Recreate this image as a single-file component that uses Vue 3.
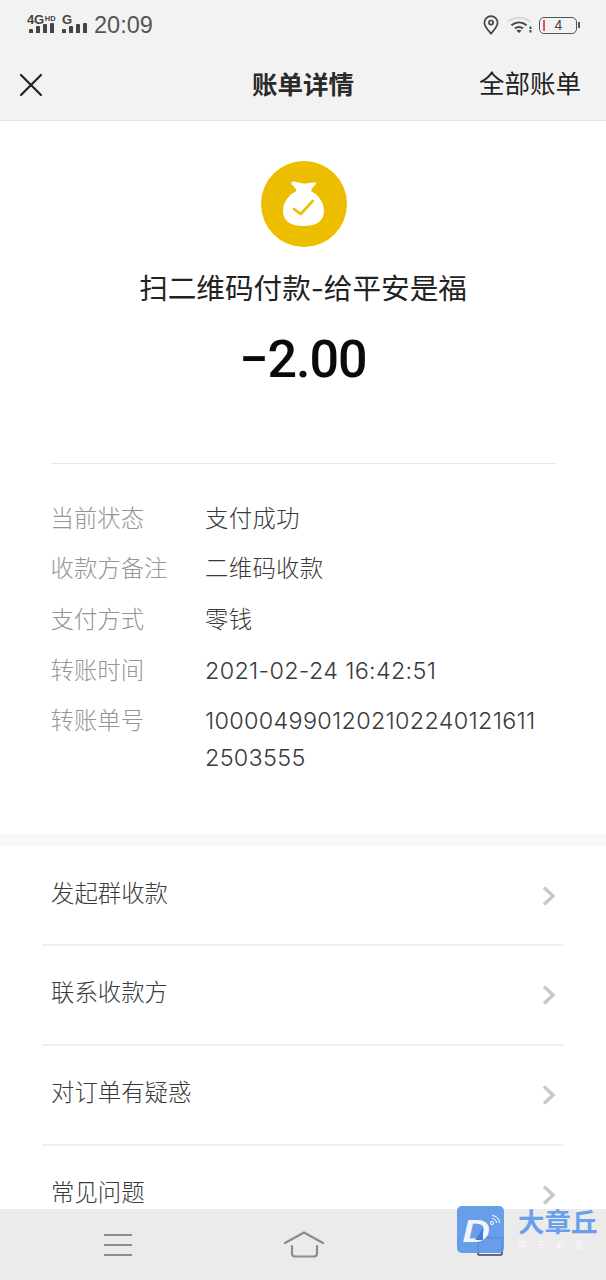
<script setup>
const details = [
  ['当前状态', '支付成功'],
  ['收款方备注', '二维码收款'],
  ['支付方式', '零钱'],
  ['转账时间', '2021-02-24 16:42:51'],
  ['转账单号', '10000499012021022401216112503555'],
]
const menu = ['发起群收款', '联系收款方', '对订单有疑惑', '常见问题']
</script>

<template>
  <div class="page">
    <header class="top">
      <div class="status">
        <div class="status-left">
          <div class="net net-4g">
            <div class="net-label"><b>4G</b><i>HD</i></div>
            <div class="bars"><span class="b1"></span><span class="b2"></span><span class="b3"></span><span class="b4"></span></div>
          </div>
          <div class="net net-g">
            <div class="net-label"><b>G</b></div>
            <div class="bars"><span class="b1"></span><span class="b2"></span><span class="b3"></span><span class="b4"></span></div>
          </div>
          <span class="clock">20:09</span>
        </div>
        <div class="status-right">
          <svg class="pin" width="16" height="20" viewBox="0 0 16 20" fill="none" stroke="#444" stroke-width="1.7">
            <path d="M8 18.6C4.6 14.6 1.4 11.6 1.4 7.8a6.6 6.6 0 0 1 13.2 0c0 3.8-3.2 6.8-6.6 10.800z" />
            <circle cx="8" cy="7.6" r="2.1" />
          </svg>
          <svg class="wifi" width="26" height="18" viewBox="0 0 26 18" fill="none">
            <path d="M1 5.6C7 .6 17 .6 23 5.6" stroke="#d8d8d8" stroke-width="2" />
            <path d="M4.4 9.2c4.6-3.6 10.600-3.600 15.200 0" stroke="#444" stroke-width="2" />
            <path d="M8 12.400c2.600-1.800 5.400-1.800 8 0" stroke="#444" stroke-width="2" />
            <path d="M12 17l-2.600-2.600c1.600-1 3.600-1 5.200 0z" fill="#444" />
            <path d="M23.500 10.500v2.400M23.500 14v2.400" stroke="#444" stroke-width="2" />
          </svg>
          <div class="battery"><span class="level"></span><span class="pct">4</span></div>
          <span class="nub"></span>
        </div>
      </div>
      <div class="nav">
        <svg class="close" width="24" height="24" viewBox="0 0 24 24" fill="none" stroke="#222" stroke-width="2.200" stroke-linecap="round">
          <path d="M2 2l20 20M22 2L2 22" />
        </svg>
        <h1>账单详情</h1>
        <span class="all">全部账单</span>
      </div>
    </header>

    <main class="content">
      <section class="summary">
        <div class="badge">
          <svg width="44" height="50" viewBox="0 0 44 50">
            <path fill="#fff" d="M10 3C13 1.500 17 5 22 4.500 26 4.500 30 3 34 3.500 34.500 4 34 5 33 6 31 8 29.500 10 29 12 36 15.500 42 23 42 32 42 43 33 47 21.500 47 10 47 1 43 1 32 1 23 7 15.500 14.500 12 14 9.500 12 7.500 10 6 9 5 9 3.500 10 3Z" />
            <path fill="none" stroke="#edbd00" stroke-width="2.600" stroke-linecap="round" stroke-linejoin="round" d="M12 30l6.700 5L30.700 22" />
          </svg>
        </div>
        <p class="title">扫二维码付款-给平安是福</p>
        <p class="amount">−2.00</p>
      </section>

      <section class="details">
        <div v-for="row in details" :key="row[0]" class="detail">
          <span class="label">{{ row[0] }}</span>
          <span class="value">{{ row[1] }}</span>
        </div>
      </section>

      <div class="band"></div>

      <ul class="menu">
        <li v-for="item in menu" :key="item">
          <span>{{ item }}</span>
          <svg width="14" height="20" viewBox="0 0 14 20" fill="none" stroke="#c8c8c8" stroke-width="3.400">
            <path d="M2 1.500L11 10l-9 8.500" />
          </svg>
        </li>
      </ul>
    </main>

    <footer class="dock">
      <svg width="30" height="24" viewBox="0 0 30 24" fill="none" stroke="#8c8c8c" stroke-width="2.200">
        <path d="M1 2h28M1 12h28M1 22h28" />
      </svg>
      <svg class="home" width="40" height="27" viewBox="0 0 40 27" fill="none" stroke="#8c8c8c" stroke-width="2.200" stroke-linecap="round">
        <path d="M1 12L20 1.500 39 12" />
        <path d="M8 15v7.500a3 3 0 0 0 3 3h19a3 3 0 0 0 3-3V15" />
      </svg>
      <svg class="recent" width="26" height="19" viewBox="0 0 26 19" fill="none" stroke="#5f6a7c" stroke-width="2.200">
        <path d="M1 3a2 2 0 0 1 2-2h20a2 2 0 0 1 2 2v13a2 2 0 0 1-2 2H3a2 2 0 0 1-2-2z" />
      </svg>
    </footer>

    <div class="mark">
      <div class="mark-tile">
        <span class="mark-d">D</span>
        <svg class="mark-cut" width="14" height="14" viewBox="0 0 14 14">
          <path d="M11 1L3 13h8z" fill="#3f7fd6" />
        </svg>
        <svg class="mark-wave" width="12" height="12" viewBox="0 0 12 12" fill="none" stroke="#fff" stroke-width="1">
          <circle cx="3" cy="9" r="1.600" />
          <path d="M3 4.500a4.500 4.500 0 0 1 4.500 4.500M3 1.500A7.500 7.500 0 0 1 10.500 9" />
        </svg>
      </div>
      <div class="mark-text">
        <span class="mark-name">大章丘</span>
        <span class="mark-sub">每天必看</span>
      </div>
    </div>
  </div>
</template>

<style>
html, body { margin: 0; background: #fff; }
</style>

<style scoped>
.page {
  position: relative;
  width: 606px;
  height: 1280px;
  display: flex;
  flex-direction: column;
  overflow: hidden;
  background: #fff;
  font-family: Inter, "Noto Sans CJK SC", sans-serif;
  color: #333;
}
.top { background: #f2f2f2; border-bottom: 1px solid #e4e4e4; height: 120px; flex: none; }
.status { height: 50px; display: flex; justify-content: space-between; align-items: center; padding: 0 26px 0 27px; }
.status-left { display: flex; align-items: center; }
.net { display: flex; flex-direction: column; margin-top: -3px; box-sizing: border-box; }
.net-4g { width: 35px; }
.net-4g .bars { padding-left: 2px; }
.net-g { width: 27px; }
.net-label { height: 9px; line-height: 9px; font-family: "Liberation Sans", sans-serif; color: #444; white-space: nowrap; }
.net-label b { font-size: 13px; letter-spacing: -.3px; }
.net-label i { font-size: 7.500px; font-style: normal; font-weight: 700; vertical-align: 3px; margin-left: 1px; }
.bars { display: flex; align-items: flex-end; gap: 3px; height: 10px; }
.bars span { width: 4px; background: #444; border-radius: 1px 1px 0 0; }
.b1 { height: 4px; }
.b2 { height: 7px; }
.b3 { height: 9px; }
.b4 { height: 10px; }
.clock { font-family: "Liberation Sans", sans-serif; font-size: 23.500px; color: #555; margin-left: 5px; }
.status-right { display: flex; align-items: center; }
.pin { margin-right: 8px; }
.wifi { margin-right: 6px; }
.battery {
  width: 38px; height: 17px; box-sizing: border-box; border: 1.300px solid #555; border-radius: 5px;
  position: relative; display: flex; align-items: center; justify-content: center;
}
.level { position: absolute; left: 3px; top: 2px; bottom: 2px; width: 2px; background: #e8505b; }
.pct { font-size: 14px; line-height: 15px; color: #444; font-family: "Liberation Sans", sans-serif; margin-left: 1px; }
.nub { width: 2px; height: 6px; background: #555; margin-left: 1px; }
.nav { height: 70px; display: flex; align-items: center; justify-content: space-between; padding: 0 25px 0 19px; position: relative; }
.nav h1 {
  margin: 0; font-size: 25.500px; font-weight: 700; color: #2a2a2a;
  position: absolute; left: 0; right: 0; text-align: center; line-height: 68px;
}
.all { font-size: 25.500px; line-height: 68px; margin-bottom: 2px; color: #222; font-weight: 400; }
.content { flex: 1; min-height: 0; overflow: hidden; }
.summary { display: flex; flex-direction: column; align-items: center; padding-top: 40px; }
.badge {
  width: 86px; height: 86px; border-radius: 50%; background: #edbd00; margin-left: 2px;
  display: flex; align-items: center; justify-content: center;
}
.title { margin: 22px 0 1px; font-size: 28.600px; line-height: 40px; color: #222; }
.amount { margin: 21px 0 0; font-family: Roboto, sans-serif; font-size: 52px; line-height: 58px; font-weight: 500; letter-spacing: -1px; color: #0a0a0a; }
.details {
  margin: 74px 50px 0 51px; padding-top: 35.500px;
  border-top: 1px solid #e6e6e6;
  display: flex; flex-direction: column; gap: 13.700px;
}
.detail { display: flex; font-size: 23.400px; line-height: 37px; font-weight: 300; }
.label { width: 154.500px; flex: none; color: #959595; margin-left: -.5px; }
.value { flex: 1; color: #3a3a3a; word-break: break-all; padding-right: 10px; letter-spacing: .3px; }
.band { height: 12px; background: #f8f8f8; margin-top: 57.500px; }
.menu { list-style: none; margin: 0 42px; padding: 1px 0 0; }
.menu li {
  height: 99.700px; box-sizing: border-box; border-bottom: 2px solid #f0f0f0;
  display: flex; align-items: center; justify-content: space-between;
  padding: 0 8px 8px 9px; font-size: 23.400px; font-weight: 300; color: #3a3a3a;
}
.menu svg { margin-top: 8px; }
.dock {
  height: 71px; flex: none; background: #ebebeb;
  display: flex; align-items: center; padding-left: 103px; gap: 151px;
}
.recent { margin-top: 3px; margin-left: 2px; }
.mark { position: absolute; left: 457px; top: 1206px; display: flex; gap: 14px; }
.mark-tile {
  width: 47px; height: 47px; border-radius: 5px; background: rgba(92, 150, 232, .92);
  position: relative; overflow: hidden; display: flex; align-items: center; justify-content: center;
}
.mark-d {
  display: block; font: italic 700 31px/47px "Liberation Sans", sans-serif; color: #f2f6ff;
  transform: scaleX(1.22); margin: 4px 9px 0 0;
}
.mark-cut { position: absolute; left: 15px; top: 21px; }
.mark-wave { position: absolute; right: 3px; top: 8px; }
.mark-text { display: flex; flex-direction: column; }
.mark-name { font-size: 26.500px; line-height: 30px; font-weight: 700; color: #6a9fe9; margin-top: 1px; white-space: nowrap; }
.mark-sub { font-size: 9px; line-height: 16px; color: rgba(255, 255, 255, .7); letter-spacing: 10px; white-space: nowrap; }
</style>
